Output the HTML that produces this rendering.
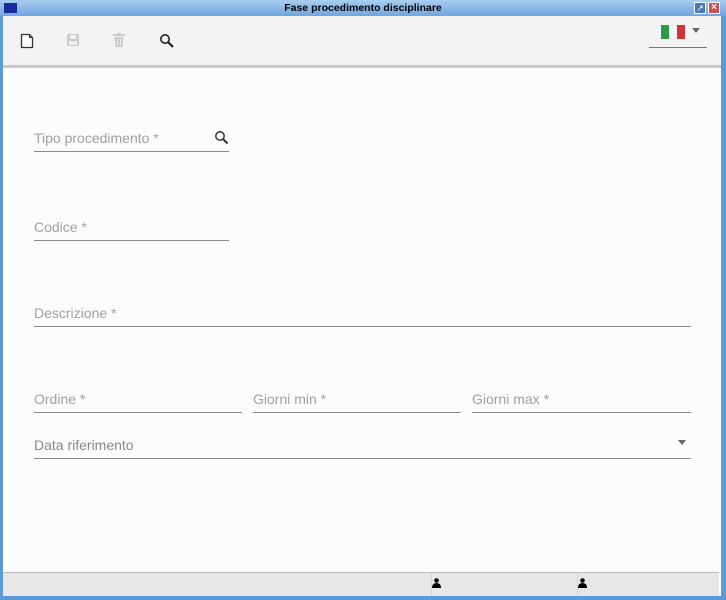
<!DOCTYPE html>
<html><head><meta charset="utf-8"><style>
*{margin:0;padding:0;box-sizing:border-box}
body{width:726px;height:600px;overflow:hidden;background:#5b9ad8;font-family:"Liberation Sans",sans-serif;position:relative}
.title{position:absolute;left:0;top:0;width:726px;height:16px;background:linear-gradient(#a9cdf0,#6fa6e0);text-align:center;font-size:10.5px;font-weight:bold;line-height:16px;color:#000}
.win{position:absolute;left:3px;top:16px;width:718px;height:580px;background:#fcfcfc}
.tb{position:absolute;left:0;top:0;width:718px;height:52px;background:#f3f3f3;border-bottom:3px solid #c8c8c8}
.f{position:absolute;border-bottom:1px solid #8a8a8a;height:23px;font-size:14px;color:#a0a0a0;line-height:18px}
.status{position:absolute;left:3px;top:572px;width:716px;height:24px;background:#e8e6e6;border-top:1px solid #bbb}
</style></head><body>
<div class="title">Fase procedimento disciplinare</div>
<div style="position:absolute;left:4px;top:3px;width:13px;height:10px;background:#1a2a9a"></div>
<div style="position:absolute;left:694px;top:2px;width:12px;height:12px;background:#4a7ab0;border:1px solid #fff;color:#fff;font-size:9px;line-height:10px;text-align:center">↗</div>
<div style="position:absolute;left:708px;top:2px;width:12px;height:12px;background:#d05050;border:1px solid #fff;color:#fff;font-size:10px;line-height:10px;text-align:center;font-weight:bold">×</div>
<div class="win">
<div class="tb">
<svg style="position:absolute;left:17px;top:17px" width="14" height="16"><path d="M1.5 1.5h8l3 3v10h-11z" fill="#fff" stroke="#333" stroke-width="1.3"/><path d="M9.5 1.5v3h3" fill="none" stroke="#333"/></svg>
<svg style="position:absolute;left:63px;top:17px" width="14" height="14"><rect x="1" y="1" width="12" height="12" rx="1" fill="#ccc"/><rect x="4" y="2" width="6" height="4" fill="#eee"/><rect x="3" y="8" width="8" height="4" fill="#eee"/></svg>
<svg style="position:absolute;left:110px;top:17px" width="12" height="14"><rect x="0" y="1" width="12" height="2" fill="#ccc"/><rect x="4" y="0" width="4" height="2" fill="#ccc"/><path d="M1.5 4h9l-1 10h-7z" fill="#ccc"/><path d="M4.5 6v6M7.5 6v6" stroke="#eee"/></svg>
<svg style="position:absolute;left:156px;top:17px" width="16" height="16"><circle cx="6" cy="6" r="4.2" fill="none" stroke="#222" stroke-width="1.6"/><path d="M9 9l5 5" stroke="#222" stroke-width="2.2"/></svg>
<div style="position:absolute;left:658px;top:9px;width:24px;height:14px;background:linear-gradient(90deg,#2e9a48 0,#2e9a48 33%,#f4f4f4 33%,#f4f4f4 66%,#d0343c 66%)"></div>
<div style="position:absolute;left:689px;top:12px;border:4px solid transparent;border-top:5px solid #666"></div>
<div style="position:absolute;left:646px;top:31px;width:58px;height:1px;background:#777"></div>
</div>
<div class="f" style="left:31px;top:113px;width:195px">Tipo procedimento *
<svg style="position:absolute;right:0;top:1px" width="15" height="15"><circle cx="6" cy="6" r="4.2" fill="none" stroke="#333" stroke-width="1.5"/><path d="M9 9l4.5 4.5" stroke="#333" stroke-width="2"/></svg></div>
<div class="f" style="left:31px;top:202px;width:195px">Codice *</div>
<div class="f" style="left:31px;top:288px;width:657px">Descrizione *</div>
<div class="f" style="left:31px;top:374px;width:208px">Ordine *</div>
<div class="f" style="left:250px;top:374px;width:208px">Giorni min *</div>
<div class="f" style="left:469px;top:374px;width:219px">Giorni max *</div>
<div class="f" style="left:31px;top:420px;width:657px;color:#888">Data riferimento
<div style="position:absolute;right:5px;top:4px;border:4px solid transparent;border-top:5px solid #666"></div></div>
</div>
<div class="status">
<div style="position:absolute;left:428px;top:0;width:1px;height:23px;background:#d4d4d4"></div>
<div style="position:absolute;left:574px;top:0;width:1px;height:23px;background:#d4d4d4"></div>
<svg style="position:absolute;left:429px;top:5px" width="9" height="10"><circle cx="4.5" cy="2.5" r="2.3"/><path d="M0 10q0-5 4.5-5t4.5 5z"/></svg>
<svg style="position:absolute;left:575px;top:5px" width="9" height="10"><circle cx="4.5" cy="2.5" r="2.3"/><path d="M0 10q0-5 4.5-5t4.5 5z"/></svg>
</div>
</body></html>
